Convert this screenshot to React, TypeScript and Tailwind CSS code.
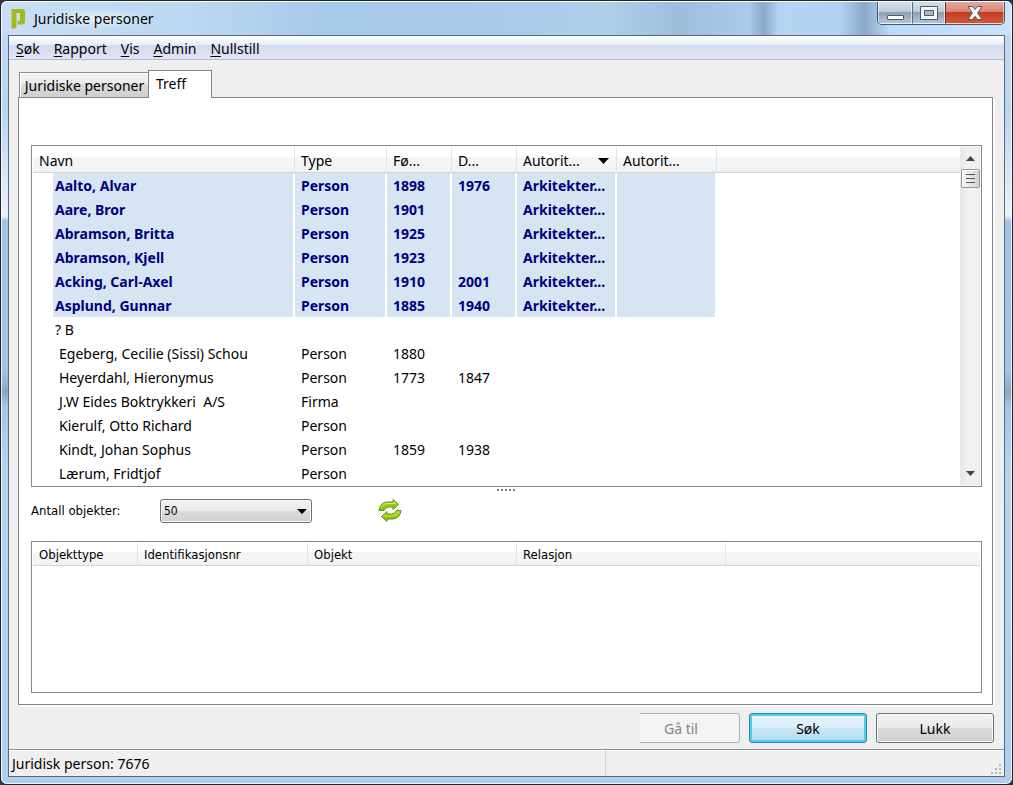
import React from "react";

type Person = {
  name: string;
  type?: string;
  born?: string;
  died?: string;
  authority?: string;
  marked?: boolean;
  outdent?: boolean;
};

const people: Person[] = [
  { name: "Aalto, Alvar", type: "Person", born: "1898", died: "1976", authority: "Arkitekter...", marked: true },
  { name: "Aare, Bror", type: "Person", born: "1901", authority: "Arkitekter...", marked: true },
  { name: "Abramson, Britta", type: "Person", born: "1925", authority: "Arkitekter...", marked: true },
  { name: "Abramson, Kjell", type: "Person", born: "1923", authority: "Arkitekter...", marked: true },
  { name: "Acking, Carl-Axel", type: "Person", born: "1910", died: "2001", authority: "Arkitekter...", marked: true },
  { name: "Asplund, Gunnar", type: "Person", born: "1885", died: "1940", authority: "Arkitekter...", marked: true },
  { name: "? B", outdent: true },
  { name: "Egeberg, Cecilie (Sissi) Schou", type: "Person", born: "1880" },
  { name: "Heyerdahl, Hieronymus", type: "Person", born: "1773", died: "1847" },
  { name: "J.W Eides Boktrykkeri \u00a0A/S", type: "Firma" },
  { name: "Kierulf, Otto Richard", type: "Person" },
  { name: "Kindt, Johan Sophus", type: "Person", born: "1859", died: "1938" },
  { name: "Lærum, Fridtjof", type: "Person" },
];

const menus = [
  ["S", "øk"],
  ["R", "apport"],
  ["V", "is"],
  ["A", "dmin"],
  ["N", "ullstill"],
];

const headBg = "bg-[linear-gradient(#fff_0,#fff_40%,#f5f6f8_41%,#f1f2f4_100%)]";
const headCell = `border-b border-r border-b-[#d5d5d5] border-r-[#e3e4e6] pt-[2px] pl-[6px] text-left font-normal whitespace-nowrap ${headBg}`;

function PersonRow({ p }: { p: Person }) {
  const cell = p.marked
    ? "h-6 border-r-2 border-white bg-[#d7e4f2] p-0 pt-[2px] pl-[6px] leading-[22px] whitespace-nowrap"
    : "h-6 border-r-2 border-white p-0 pt-[2px] pl-[6px] leading-[22px] whitespace-nowrap";
  return (
    <tr className={p.marked ? "font-bold text-[#000080]" : ""}>
      <td className="h-6 border-r-2 border-white p-0 pl-5 whitespace-nowrap">
        <div
          className={
            p.marked
              ? "bg-[#d7e4f2] pt-[2px] pl-[2px] leading-[22px]"
              : p.outdent
                ? "pt-[2px] pl-[2px] leading-[22px]"
                : "pt-[2px] pl-[6px] leading-[22px]"
          }
        >
          {p.name}
        </div>
      </td>
      <td className={cell}>{p.type}</td>
      <td className={cell}>{p.born}</td>
      <td className={cell}>{p.died}</td>
      <td className={cell}>{p.authority}</td>
      <td className={cell}></td>
      <td className="p-0"></td>
    </tr>
  );
}

function Logo() {
  return (
    <svg width="15" height="20" viewBox="0 0 15 20" aria-hidden="true">
      <path d="M.5 0H11Q14 0 14 3V12.500Q14 15.500 11 15.500H6.500V12H9V4H5.500V19L.5 19.800Z" fill="#a3b922" />
    </svg>
  );
}

function RefreshIcon() {
  return (
    <svg width="24" height="24" viewBox="0 0 24 24" aria-hidden="true">
      <defs>
        <linearGradient id="leaf" x1="0" y1="0" x2="0" y2="1">
          <stop offset="0" stopColor="#b9dd3b" />
          <stop offset="0.5" stopColor="#9acb0c" />
          <stop offset="1" stopColor="#80b500" />
        </linearGradient>
      </defs>
      <g fill="url(#leaf)" stroke="#5d9418" strokeWidth="1" strokeLinejoin="round">
        <path d="M1 11.500H6Q7 8 10.500 8H15V10.500L20.500 5.500L15 .5V3H9.500Q2 3.500 1 11.500Z" />
        <path d="M23 11.500H18.500Q17 15 13.500 15H9V12.500L3.500 17.500L9 22.500V20H14.500Q22 19.500 23 11.500Z" />
      </g>
      <path d="M3 9Q5 4.500 10 4.500H16.200V3L18.500 5.300" fill="none" stroke="#d3ec7c" strokeWidth="1" />
      <path d="M5.500 17H14Q18.500 16.500 20 13" fill="none" stroke="#c0e052" strokeWidth="1" />
    </svg>
  );
}

export default function App() {
  return (
    <div className="flex min-h-screen flex-col bg-[#303338] font-['Noto_Sans','Segoe_UI',sans-serif] text-[14px] text-black">
      <div className="flex flex-1 flex-col rounded-[7px] border border-[#20242c] bg-[linear-gradient(#c3dcf4_0,#bad5ef_110px,#eaf3fc_215px,#a1c3e6_220px,#a4c5e8_370px,#8aa5c1_391px,#a4c5e8_405px,#b5d4f2_470px,#b0cff0_100%)]">
        <div className="flex flex-1 flex-col rounded-[6px] border border-white/80 border-t-white">
          <header className="flex h-[33px] items-start rounded-t-[5px] bg-[linear-gradient(90deg,#c9def4_0,#bdd8f2_18%,#a6cae9_32%,#a8caea_45%,#accfea_60%,#9dbfdc_67%,#a9caea_74%,#8ba9c8_75.500%,#b4d4f2_77%,#b2d2f1_83%,#8aa9c9_85.500%,#bddaf8_88%,#c9e3fc_100%)] pr-[6px] pl-[9px]">
            <div className="flex h-8 items-center gap-2 pt-px">
              <Logo />
              <h1 className="bg-[radial-gradient(closest-side,#ffffff90,#ffffff00)] text-[14px] font-normal">Juridiske personer</h1>
            </div>
            <div className="ml-auto flex h-[23px] overflow-hidden rounded-b-[5px] border border-t-0 border-[#4b5563]">
              <button
                type="button"
                aria-label="Minimer"
                className="flex w-[34px] items-end justify-center border border-t-0 border-white/60 bg-[linear-gradient(#d3dfeb_0,#bccbda_45%,#8e9fb2_50%,#b0c4da_100%)] pb-[3px]"
              >
                <span className="h-[5px] w-[17px] rounded-[1px] border border-[#50596a] bg-white"></span>
              </button>
              <button
                type="button"
                aria-label="Maksimer"
                className="flex w-[33px] items-center justify-center border border-t-0 border-l-[#5c6b7c] border-white/60 bg-[linear-gradient(#d3dfeb_0,#bccbda_45%,#8e9fb2_50%,#b0c4da_100%)]"
              >
                <svg width="18" height="14" viewBox="0 0 18 14" aria-hidden="true">
                  <path d="M.5.5H17.500V13.500H.5Z" fill="#f5f5f5" stroke="#50596a" />
                  <path d="M4.500 4.500H13.500V9.500H4.500Z" fill="#a7b7c8" stroke="#50596a" />
                </svg>
              </button>
              <button
                type="button"
                aria-label="Lukk vindu"
                className="flex w-[59px] items-center justify-center border border-t-0 border-l-[#6b2a20] border-white/50 bg-[linear-gradient(#e5aa9b_0,#d98673_45%,#c63c22_50%,#d0573c_100%)]"
              >
                <svg width="16" height="14" viewBox="0 0 16 14" aria-hidden="true">
                  <path
                    d="M1 .5H5.500L8 3.500L10.500 .5H15L10.700 7L15 13.500H10.500L8 10.300L5.500 13.500H1L5.300 7Z"
                    fill="#f4f4f4"
                    stroke="#545866"
                    strokeLinejoin="round"
                  />
                </svg>
              </button>
            </div>
          </header>

          <div className="mx-[6px] mb-[6px] flex flex-1 flex-col border border-[#59687b] bg-[#efefef]">
            <nav
              aria-label="Hovedmeny"
              className="flex h-6 items-center gap-[14px] border-b border-[#b4bad2] bg-[linear-gradient(#fff_0,#e6ebf5_40%,#d4dbee_41%,#e0e5f5_100%)] px-[7px] pt-px"
            >
              {menus.map(([first, rest]) => (
                <button key={first} type="button" className="whitespace-nowrap">
                  <u className="underline-offset-2">{first}</u>
                  {rest}
                </button>
              ))}
            </nav>

            <main className="flex flex-1 flex-col pt-[10px] pr-[10px] pl-[9px]">
              <div role="tablist" className="flex items-end pl-px">
                <button
                  type="button"
                  role="tab"
                  aria-selected="false"
                  className="h-[25px] w-[129px] border border-r-0 border-b-0 border-[#8d8e96] bg-[linear-gradient(#f2f2f2_0,#ebebeb_45%,#dcdcdc_46%,#cfcfcf_100%)] pl-px whitespace-nowrap shadow-[inset_1px_1px_0_#fff]"
                >
                  Juridiske personer
                </button>
                <button
                  type="button"
                  role="tab"
                  aria-selected="true"
                  className="relative -mb-px h-[28px] w-[64px] border border-b-0 border-[#83848f] bg-white pb-[2px] pl-[7px] text-left"
                >
                  Treff
                </button>
              </div>

              <section className="mr-px flex flex-1 flex-col border border-[#83848f] bg-white px-[12px] pt-[47px] pb-[11px] shadow-[1px_1px_0_#fff,2px_2px_0_#fff]">
                <div className="mr-[-2px] flex border border-[#828790] p-px">
                  <table className="min-w-0 flex-1 table-fixed border-separate border-spacing-0">
                    <colgroup>
                      <col className="w-[262px]" />
                      <col className="w-[92px]" />
                      <col className="w-[65px]" />
                      <col className="w-[65px]" />
                      <col className="w-[100px]" />
                      <col className="w-[100px]" />
                      <col />
                    </colgroup>
                    <thead>
                      <tr className="h-[26px]">
                        <th className={headCell}>Navn</th>
                        <th className={headCell}>Type</th>
                        <th className={headCell}>Fø...</th>
                        <th className={headCell}>D...</th>
                        <th className={headCell} aria-sort="descending">
                          <button type="button" className="flex w-full items-center justify-between pr-[7px]">
                            Autorit...
                            <svg width="11" height="6" viewBox="0 0 11 6" aria-hidden="true">
                              <path d="M0 0H11L5.500 6Z" />
                            </svg>
                          </button>
                        </th>
                        <th className={headCell}>Autorit...</th>
                        <th className={`border-b border-[#d5d5d5] ${headBg}`}></th>
                      </tr>
                    </thead>
                    <tbody>
                      {people.map((p) => (
                        <PersonRow key={p.name} p={p} />
                      ))}
                    </tbody>
                  </table>
                  <div className="flex w-5 shrink-0 flex-col items-center border border-[#e9e9e9] bg-[linear-gradient(90deg,#e6e6e6_0,#f0f0f0_30%,#f0f0f0_100%)]">
                    <button type="button" aria-label="Rull opp" className="flex h-[21px] w-full items-center justify-center">
                      <svg width="9" height="5" viewBox="0 0 9 5" aria-hidden="true">
                        <path d="M0 5L4.500 0L9 5Z" fill="#444" />
                      </svg>
                    </button>
                    <div className="flex h-[19px] w-[19px] flex-col items-center justify-center gap-[3px] rounded-[2px] border border-[#979797] bg-[linear-gradient(90deg,#f5f5f5_0,#e6e6e6_50%,#cfcfcf_100%)] shadow-[inset_1px_1px_0_#fff]">
                      <span className="h-px w-[9px] bg-[#555]"></span>
                      <span className="h-px w-[9px] bg-[#555]"></span>
                      <span className="h-px w-[9px] bg-[#555]"></span>
                    </div>
                    <button type="button" aria-label="Rull ned" className="mt-auto flex h-[21px] w-full items-center justify-center">
                      <svg width="9" height="5" viewBox="0 0 9 5" aria-hidden="true">
                        <path d="M0 0L4.500 5L9 0Z" fill="#444" />
                      </svg>
                    </button>
                  </div>
                </div>

                <div className="flex h-[12px] justify-center gap-[2px] pt-[2px]">
                  {[0, 1, 2, 3, 4].map((i) => (
                    <span key={i} className="h-[2px] w-[2px] bg-[#7d7d7d]"></span>
                  ))}
                </div>

                <div className="flex h-[24px] items-center font-['DejaVu_Sans_Condensed','DejaVu_Sans',sans-serif] text-[13px]">
                  <label htmlFor="count" className="w-[129px]">
                    Antall objekter:
                  </label>
                  <div className="grid w-[152px] items-center">
                    <select
                      id="count"
                      defaultValue="50"
                      className="col-start-1 row-start-1 h-[24px] appearance-none rounded-[3px] border border-[#707070] bg-[linear-gradient(#f2f2f2_0,#ebebeb_48%,#dcdcdc_50%,#cfcfcf_100%)] pl-[3px] text-[12px] shadow-[inset_0_0_0_1px_#f8f8f8]"
                    >
                      <option>50</option>
                      <option>100</option>
                    </select>
                    <svg
                      className="pointer-events-none col-start-1 row-start-1 mr-[5px] justify-self-end"
                      width="10"
                      height="5"
                      viewBox="0 0 10 5"
                      aria-hidden="true"
                    >
                      <path d="M0 0H10L5 5Z" />
                    </svg>
                  </div>
                  <button type="button" aria-label="Oppdater" className="ml-[66px]">
                    <RefreshIcon />
                  </button>
                </div>

                <div className="mt-[18px] mr-[-2px] min-h-[120px] flex-1 border border-[#828790] p-px font-['DejaVu_Sans_Condensed','DejaVu_Sans',sans-serif] text-[13px]">
                  <table className="w-full table-fixed border-separate border-spacing-0">
                    <colgroup>
                      <col className="w-[105px]" />
                      <col className="w-[170px]" />
                      <col className="w-[209px]" />
                      <col className="w-[209px]" />
                      <col />
                    </colgroup>
                    <thead>
                      <tr className="h-[23px] leading-[20px]">
                        <th className={headCell}>Objekttype</th>
                        <th className={headCell}>Identifikasjonsnr</th>
                        <th className={headCell}>Objekt</th>
                        <th className={headCell}>Relasjon</th>
                        <th className={`border-b border-[#d5d5d5] ${headBg}`}></th>
                      </tr>
                    </thead>
                  </table>
                </div>
              </section>

              <div className="flex justify-end gap-[9px] pt-[8px] pb-[6px]">
                <button
                  type="button"
                  disabled
                  className="h-[30px] w-[100px] rounded-r-[3px] border border-l-0 border-[#adb2b5] bg-[#f4f4f4] pr-[17px] text-[#838383]"
                >
                  Gå til
                </button>
                <button
                  type="button"
                  className="h-[30px] w-[118px] rounded-[3px] border border-[#3c7fb1] bg-[linear-gradient(#eaf6fd_0,#daeffa_48%,#c9e7f6_50%,#b5dcf2_100%)] shadow-[inset_0_0_0_2px_#48d0f5]"
                >
                  Søk
                </button>
                <button
                  type="button"
                  className="h-[30px] w-[118px] rounded-[3px] border border-[#707070] bg-[linear-gradient(#f2f2f2_0,#ebebeb_48%,#dcdcdc_50%,#cfcfcf_100%)] shadow-[inset_0_0_0_1px_#fafafa]"
                >
                  Lukk
                </button>
              </div>
            </main>

            <footer className="flex h-[27px] border-t border-[#8f9197] shadow-[inset_0_1px_0_#fff]">
              <div className="w-3/5 border-r border-[#d6d6d6] pt-[4px] pl-[3px] leading-[20px]">Juridisk person: 7676</div>
              <svg className="mt-auto ml-auto" width="14" height="14" viewBox="0 0 14 14" aria-hidden="true">
                <path d="M9 2h2v2h-2zM9 6h2v2h-2zM9 10h2v2h-2zM5 6h2v2h-2zM5 10h2v2h-2zM1 10h2v2h-2z" fill="#b5b5b5" />
              </svg>
            </footer>
          </div>
        </div>
      </div>
    </div>
  );
}
